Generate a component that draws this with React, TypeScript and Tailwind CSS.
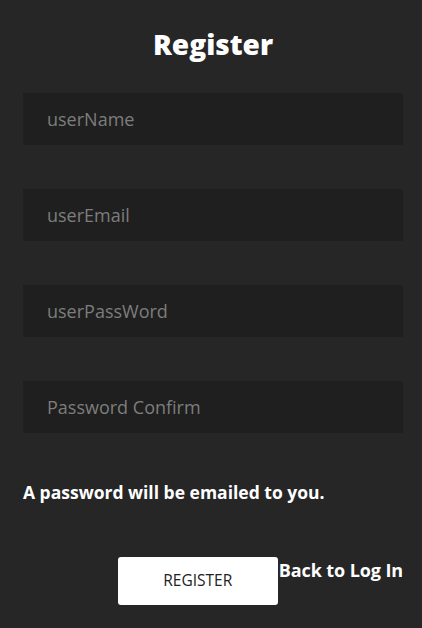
export default function App() {
  const fields = ['userName', 'userEmail', 'userPassWord', 'Password Confirm'];

  return (
    <div className="min-h-[628px] w-full bg-[#262626] pt-[26px] pr-[19px] pb-[23px] pl-[23px]" style={{ fontFamily: '"Open Sans", sans-serif' }}>
      <h1 className="text-center text-[28px] leading-[36px] font-extrabold text-white">Register</h1>

      <form className="mt-[31px] flex flex-col gap-[44px]">
        {fields.map((f) => (
          <input
            key={f}
            type={f.toLowerCase().includes('pass') ? 'password' : 'text'}
            placeholder={f}
            className="h-[52px] w-full bg-[#1f1f1f] px-6 text-[18px] text-white outline-none placeholder:text-[#7d7d7d]"
          />
        ))}
      </form>

      <p className="mt-[48px] text-[17.5px] leading-[22px] font-bold text-white">A password will be emailed to you.</p>

      <div className="mt-[54px] flex items-start justify-end">
        <button type="button" className="h-[48px] w-[160px] rounded-[3px] bg-white text-[15.5px] text-[#222]">
          REGISTER
        </button>
        <a className="ml-px pt-[1px] text-[18px] leading-[24px] font-bold tracking-[-0.1px] text-white">Back to Log In</a>
      </div>
    </div>
  );
}
